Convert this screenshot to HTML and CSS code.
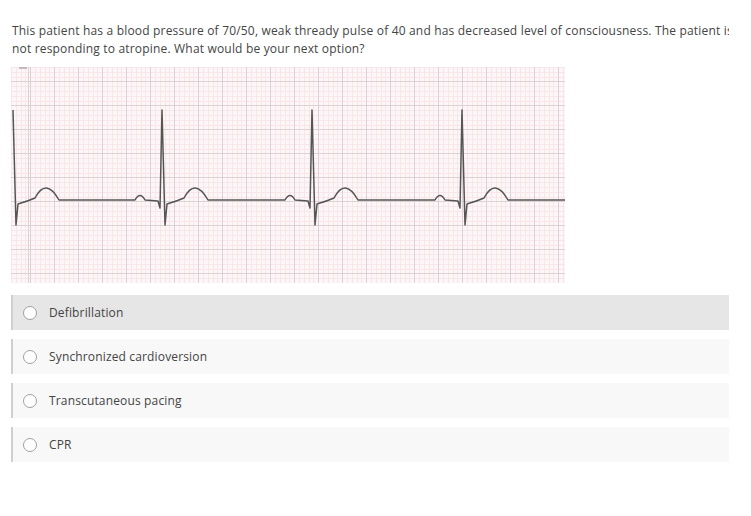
FILE: index.html
```html
<!DOCTYPE html>
<html>
<head>
<meta charset="utf-8">
<link rel="stylesheet" href="styles.css">
</head>
<body>
<div class="page">
  <p class="question">This patient has a blood pressure of 70/50, weak thready pulse of 40 and has decreased level of consciousness. The patient is not responding to atropine. What would be your next option?</p>
  <div class="ecg">
    <svg width="554" height="216" viewBox="0 0 554 216">
      <path class="mark" d="M8 1 L16 1"/>
      <path class="trace" d="M2 43 L5 158 L7 137 L10 136 Q17 134 24 131 Q35 110 48 133 L124 133 Q129 124 134 133 L147 134 L149 141 L151 43 L154 158 L156 137 L159 136 Q166 134 173 131 Q184 110 197 133 L274 133 Q279 124 284 133 L297 134 L299 141 L301 43 L304 158 L306 137 L309 136 Q316 134 323 131 Q334 110 347 133 L424 133 Q429 124 434 133 L447 134 L449 141 L451 43 L454 158 L456 137 L459 136 Q466 134 473 131 Q484 110 497 133 L554 133"/>
    </svg>
  </div>
  <ul class="options">
    <li class="option selected"><span class="radio"></span><span class="label">Defibrillation</span></li>
    <li class="option"><span class="radio"></span><span class="label">Synchronized cardioversion</span></li>
    <li class="option"><span class="radio"></span><span class="label">Transcutaneous pacing</span></li>
    <li class="option"><span class="radio"></span><span class="label">CPR</span></li>
  </ul>
</div>
</body>
</html>
```

FILE: styles.css
```css
html, body {
  margin: 0;
  padding: 0;
  background: #ffffff;
}
body {
  font-family: "Open Sans", "Liberation Sans", sans-serif;
  font-size: 12px;
  color: #444444;
}
.page {
  width: 718px;
  margin-left: 11px;
  padding-top: 22px;
  overflow: hidden;
}
.question {
  width: 735px;
  margin: 0 0 0 1px;
  font-size: 12px;
  letter-spacing: 0.18px;
  line-height: 18px;
}
.ecg {
  margin-top: 9px;
  width: 554px;
  height: 216px;
  background-color: #fdf6f8;
  background-image:
    repeating-linear-gradient(to right, #ddd1d4 0 1px, transparent 1px 24px),
    repeating-linear-gradient(to bottom, #ddd1d4 0 1px, transparent 1px 24px),
    repeating-linear-gradient(to right, #f7e7eb 0 1px, transparent 1px 4.8px),
    repeating-linear-gradient(to bottom, #f7e7eb 0 1px, transparent 1px 4.8px);
  background-position: 19px 0, 0 14px, 0 0, 0 0;
}
.ecg svg {
  display: block;
}
.trace {
  fill: none;
  stroke: #555555;
  stroke-width: 1.5;
  stroke-linejoin: round;
}
.mark {
  stroke: #888;
  stroke-width: 1;
}
.options {
  list-style: none;
  margin: 12px 0 0 0;
  padding: 0;
  display: flex;
  flex-direction: column;
  gap: 9px;
}
.option {
  display: flex;
  align-items: center;
  height: 35px;
  border-left: 2px solid #cfcfcf;
  background: #f8f8f8;
  box-sizing: border-box;
}
.option.selected {
  background: #e6e6e6;
}
.radio {
  width: 12px;
  height: 12px;
  border: 1.5px solid #a0a0a0;
  border-radius: 50%;
  background: #fff;
  margin-left: 10px;
  flex: none;
}
.label {
  margin-left: 12px;
  letter-spacing: 0.15px;
  color: #444444;
}
```
